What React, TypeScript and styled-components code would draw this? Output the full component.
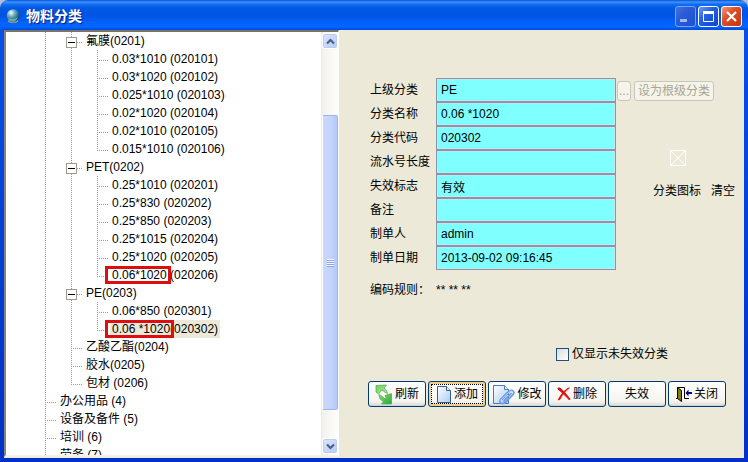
import React from "react";
import styled, { createGlobalStyle, css } from "styled-components";

const Global = createGlobalStyle`
  * { box-sizing: border-box; }
  body {
    margin: 0;
    background: #b9bcd6;
    font: 12px/18px "Liberation Sans", "Noto Sans CJK SC", sans-serif;
    color: #000;
  }
  button, input { font: inherit; color: inherit; margin: 0; padding: 0; }
`;

const Window = styled.div`
  display: flex;
  flex-direction: column;
  height: 100vh;
  border-radius: 8px 8px 0 0;
  overflow: hidden;
  background: #ece9d8;
`;

const TitleBar = styled.header`
  display: flex;
  align-items: center;
  gap: 6px;
  flex: 0 0 30px;
  padding: 2px 6px 0 6px;
  background: linear-gradient(#0a4fd0 0, #3c96ff 2px, #1670f2 4px, #0258e4 8px, #0054e3 16px, #0262fb 22px, #0266ff 27px, #0048d8 30px);
`;

const Title = styled.h1`
  flex: 1;
  margin: 0;
  font: bold 14px/20px "Liberation Sans", "Noto Sans CJK SC", sans-serif;
  color: #fff;
  text-shadow: 1px 1px 1px #0a1883;
`;

const Controls = styled.div`
  display: flex;
  gap: 2px;
`;

const ControlButton = styled.button<{ $tone: "dim" | "blue" | "red" }>`
  display: flex;
  width: 21px;
  height: 21px;
  border: 1px solid ${(p) => (p.$tone === "dim" ? "#7ba2ee" : "#fff")};
  border-radius: 3px;
  background: ${(p) =>
    p.$tone === "red"
      ? "linear-gradient(135deg, #ee9a7f, #de4e29 40%, #c63410)"
      : p.$tone === "blue"
        ? "linear-gradient(135deg, #6c99f5, #2260e4 40%, #0b46cf)"
        : "linear-gradient(135deg, #3f71e2, #2a5cd8 40%, #2050cc)"};
`;

const Body = styled.div`
  display: grid;
  grid-template-columns: 335px minmax(0, 1fr);
  flex: 1;
  min-height: 0;
  border: solid #0a3fe0;
  border-width: 0 4px 4px 4px;
  border-image: linear-gradient(#0650e8, #0030c8) 1;
`;

const TreePanel = styled.nav`
  display: flex;
  min-height: 0;
  margin-bottom: 1px;
  border: 2px solid;
  border-color: #77756b #fff #f4f2e8 #85837a;
  border-right-width: 1px;
  background: #fff;
`;

const Tree = styled.ul`
  flex: 1;
  margin: 0;
  padding: 0 0 0 26px;
  overflow: hidden;
  list-style: none;
`;

const TreeRow = styled.li`
  display: flex;
  height: 18px;
  white-space: pre;
`;

type GuideKind = "line" | "tee" | "end";

const Guide = styled.span<{ $kind: GuideKind }>`
  display: flex;
  align-items: center;
  justify-content: center;
  flex: 0 0 26px;
  background:
    repeating-linear-gradient(#9d9b90 0 1px, transparent 1px 2px) 13px 0 / 1px ${(p) => (p.$kind === "end" ? "10px" : "100%")} no-repeat
    ${(p) =>
      p.$kind !== "line" &&
      css`, repeating-linear-gradient(90deg, #9d9b90 0 1px, transparent 1px 2px) 13px 10px / 12px 1px no-repeat`};
`;

const Expander = styled.button`
  display: flex;
  align-items: center;
  justify-content: center;
  width: 11px;
  height: 11px;
  margin-top: 2px;
  margin-left: 1px;
  border: 1px solid #9d9b90;
  background: #fff;

  &::before {
    content: "";
    width: 7px;
    height: 1px;
    background: #000;
  }
`;

const NodeText = styled.span<{ $selected?: boolean }>`
  padding: 0 2px;
  background: ${(p) => (p.$selected ? "#ece9d8" : "transparent")};
`;

const Mark = styled.span`
  position: relative;
  display: inline-block;

  &::after {
    content: "";
    position: absolute;
    inset: 0 -4px 0 -7px;
    border: 3px solid #dd0d10;
  }
`;

const ScrollBar = styled.div`
  display: flex;
  flex-direction: column;
  flex: 0 0 17px;
  padding: 1px 0;
  border-left: 1px solid #eeede5;
  background: linear-gradient(90deg, #f3f1ec, #fefefb);
`;

const ScrollButton = styled.button`
  display: flex;
  align-items: center;
  justify-content: center;
  flex: 0 0 16px;
  border: 1px solid #fff;
  border-radius: 3px;
  background: linear-gradient(135deg, #dbe5fd, #b7cbf8);
  box-shadow: inset 0 0 0 1px #bccbf0;
`;

const Track = styled.div`
  display: grid;
  grid-template-rows: 66fr 294fr 28fr;
  flex: 1;
`;

const Thumb = styled.div`
  display: flex;
  flex-direction: column;
  align-items: center;
  justify-content: center;
  gap: 1px;
  grid-row: 2;
  border: 1px solid #9fb5ea;
  border-left-color: #fff;
  border-radius: 2px;
  background: linear-gradient(90deg, #cbd8fc, #c3d3fd 60%, #b4c8f8);
`;

const Grip = styled.i`
  width: 7px;
  height: 1px;
  background: #f4f8ff;
  box-shadow: 0 1px #8ca5e4;
`;

const Panel = styled.main`
  padding: 48px 0 0 29px;
`;

const FormArea = styled.div`
  display: grid;
  grid-template-columns: minmax(0, 1fr) 128px;
  padding-left: 2px;
`;

const Field = styled.label`
  display: grid;
  grid-template-columns: 66px minmax(0, 1fr);
  align-items: center;
  height: 24px;
`;

const TextBox = styled.input`
  height: 24px;
  padding: 0 4px;
  border: 1px solid #8796a9;
  border-radius: 0;
  box-shadow: inset 0 0 0 1px #c0e8f0;
  background: #80ffff;
`;

const Side = styled.div`
  display: flex;
  flex-direction: column;
  padding: 3px 0 0 1px;
`;

const SideButtons = styled.div`
  display: flex;
  gap: 3px;
`;

const GhostButton = styled.button`
  height: 20px;
  padding: 0 3px;
  line-height: 18px;
  border: 1px solid #c9c7ba;
  border-radius: 3px;
  background: #f5f4ea;
  color: #a7a594;
  white-space: nowrap;

  &:first-child {
    padding: 0 1px;
  }
`;

const PictureSlot = styled.div`
  display: flex;
  height: 16px;
  margin: 49px 0 0 53px;
`;

const PictureActions = styled.div`
  display: flex;
  gap: 10px;
  margin: 16px 0 0 36px;
`;

const Rule = styled.div`
  display: grid;
  grid-template-columns: 66px 1fr;
  margin-top: 11px;
  padding-left: 2px;
  white-space: nowrap;
`;

const Filter = styled.label`
  display: flex;
  align-items: center;
  gap: 3px;
  width: max-content;
  margin: 46px 76px 0 auto;
`;

const CheckBox = styled.input`
  appearance: none;
  width: 13px;
  height: 13px;
  border: 1px solid #1d5180;
  background: linear-gradient(135deg, #dcdcd7, #fff);
`;

const Actions = styled.div`
  display: flex;
  gap: 2px;
  margin-top: 18px;
`;

const ActionButton = styled.button<{ $active?: boolean }>`
  display: flex;
  align-items: center;
  justify-content: center;
  gap: 2px;
  flex: 0 0 58px;
  height: 26px;
  border: 1px solid #003c74;
  border-radius: 3px;
  background: linear-gradient(#fff, #f5f4ee 80%, #dcd8cc);
  white-space: nowrap;
  ${(p) =>
    p.$active
      ? css`
          box-shadow: inset 0 0 0 2px #f0cf8c;
          outline: 1px dotted #000;
          outline-offset: -4px;
        `
      : css`
          box-shadow: inset 0 -1px #c8d4e6;
        `}
`;

interface Node {
  guides: GuideKind[];
  name: string;
  code: string;
  open?: boolean;
  marked?: boolean;
  selected?: boolean;
}

const leaf = (name: string, code: string, last = false): Node => ({
  guides: ["line", "line", last ? "end" : "tee"],
  name,
  code,
});

const nodes: Node[] = [
  { guides: ["line", "tee"], name: "氟膜", code: "(0201)", open: true },
  leaf("0.03*1010", " (020101)"),
  leaf("0.03*1020", " (020102)"),
  leaf("0.025*1010", " (020103)"),
  leaf("0.02*1020", " (020104)"),
  leaf("0.02*1010", " (020105)"),
  leaf("0.015*1010", " (020106)", true),
  { guides: ["line", "tee"], name: "PET", code: "(0202)", open: true },
  leaf("0.25*1010", " (020201)"),
  leaf("0.25*830", " (020202)"),
  leaf("0.25*850", " (020203)"),
  leaf("0.25*1015", " (020204)"),
  leaf("0.25*1020", " (020205)"),
  { ...leaf("0.06*1020", " (020206)", true), marked: true },
  { guides: ["line", "tee"], name: "PE", code: "(0203)", open: true },
  leaf("0.06*850", " (020301)"),
  { ...leaf("0.06 *1020", "(020302)", true), marked: true, selected: true },
  { guides: ["line", "tee"], name: "乙酸乙酯", code: "(0204)" },
  { guides: ["line", "tee"], name: "胶水", code: "(0205)" },
  { guides: ["line", "end"], name: "包材", code: " (0206)" },
  { guides: ["tee"], name: "办公用品", code: " (4)" },
  { guides: ["tee"], name: "设备及备件", code: " (5)" },
  { guides: ["tee"], name: "培训", code: " (6)" },
  { guides: ["tee"], name: "劳务", code: " (7)" },
];

const fields = [
  ["上级分类", "PE"],
  ["分类名称", "0.06 *1020"],
  ["分类代码", "020302"],
  ["流水号长度", ""],
  ["失效标志", "有效"],
  ["备注", ""],
  ["制单人", "admin"],
  ["制单日期", "2013-09-02 09:16:45"],
];

const Globe = () => (
  <svg width="14" height="14" viewBox="0 0 14 14" aria-hidden="true">
    <defs>
      <radialGradient id="globe" cx="35%" cy="28%" r="75%">
        <stop offset="0" stopColor="#f2ffff" />
        <stop offset=".35" stopColor="#7eb9c4" />
        <stop offset=".75" stopColor="#28718e" />
        <stop offset="1" stopColor="#0c3d66" />
      </radialGradient>
    </defs>
    <ellipse cx="7" cy="12" rx="5" ry="2" fill="#8e9b8f" />
    <circle cx="7" cy="6.5" r="6.3" fill="url(#globe)" />
    <path d="M2 9Q7 12 12 8Q10 13 7 12.6Q3 12.5 2 9Z" fill="#a8dcc8" opacity=".6" />
  </svg>
);

const Chevron = ({ down = false }: { down?: boolean }) => (
  <svg width="9" height="7" viewBox="0 0 9 7" aria-hidden="true">
    <path d={down ? "M1 1.5L4.5 5L8 1.5" : "M1 5.5L4.5 2L8 5.5"} fill="none" stroke="#4d6185" strokeWidth="2.2" />
  </svg>
);

const RefreshIcon = () => (
  <svg width="18" height="21" viewBox="0 0 18 21" aria-hidden="true">
    <defs>
      <linearGradient id="greenTop" x2="1" y2="1">
        <stop stopColor="#6fcf5c" />
        <stop offset="1" stopColor="#b5e8a0" />
      </linearGradient>
      <linearGradient id="greenLow" x2="1" y2="1">
        <stop stopColor="#8ddb78" />
        <stop offset="1" stopColor="#2aa836" />
      </linearGradient>
    </defs>
    <g stroke="#45ae48" strokeWidth=".7" strokeLinejoin="round">
      <path d="M1 1.5L11.5 1L9 4Q12 6 12.5 9.5L9.5 8Q8.500 6.500 6.500 6.500L3.500 10L1 8Z" fill="url(#greenTop)" />
      <path d="M4 10.500L7.500 12.500Q9 15 11.500 14.500L10 11.500L16.500 9.500L16.500 20H6.500L8.500 17.500Q4 15.500 4 10.500Z" fill="url(#greenLow)" />
    </g>
  </svg>
);

const PageShape = () => (
  <>
    <defs>
      <linearGradient id="paper" x2="1" y2="1">
        <stop stopColor="#fff" />
        <stop offset="1" stopColor="#a9cbf1" />
      </linearGradient>
    </defs>
    <path d="M1.5 1.5H10.5L14.5 5.5V17.5H1.5Z" fill="url(#paper)" stroke="#315b99" />
    <path d="M10.5 1.5V5.5H14.5" fill="#e9f3ff" stroke="#315b99" />
  </>
);

const PageIcon = () => (
  <svg width="16" height="19" viewBox="0 0 16 19" aria-hidden="true">
    <PageShape />
  </svg>
);

const EditIcon = () => (
  <svg width="23" height="21" viewBox="0 0 23 21" aria-hidden="true">
    <path d="M1.5 1.5H12.5L16.5 5.5V19.5H1.5Z" fill="url(#paper)" stroke="#4a78b8" />
    <path d="M12.5 1.5V5.5H16.5" fill="#e9f3ff" stroke="#4a78b8" />
    <path
      d="M10.500 15L17.500 7.500Q19.500 5.500 21.200 7.300Q22.500 9 21 10.700L13 18.800Q10.500 20.500 8.700 18.800Q7.200 17 9 15L15.500 8.500M12 17L19 9.500"
      fill="none"
      stroke="#6e9be0"
      strokeWidth="1.8"
      strokeLinecap="round"
    />
    <path d="M9 17.500Q8.500 16.500 9.500 15.200L17.500 7.800Q19.500 6.200 20.700 7.700" fill="none" stroke="#c6dcfa" strokeWidth=".8" />
  </svg>
);

const DeleteIcon = () => (
  <svg width="14" height="14" viewBox="0 0 14 14" aria-hidden="true">
    <path d="M1 1L3 1Q7 4 13 12L12.5 13Q7 7 1 2Z" fill="#e01010" stroke="#e01010" />
    <path d="M12.5 1Q6 5 3 12.5L1 13Q4 6 11 1Z" fill="#e01010" stroke="#e01010" strokeWidth=".7" />
  </svg>
);

const DoorIcon = () => (
  <svg width="16" height="15" viewBox="0 0 16 15" aria-hidden="true">
    <path d="M0 11.5H2M1.5 11V.5H8.5V11.5H13" fill="none" stroke="#000" />
    <path d="M1.5 .5L5.5 3.5V14.5L1.5 11.5Z" fill="#858000" stroke="#000" />
    <path d="M9.500 6L12.500 2.500V5H16V7H12.500V9.500Z" fill="#000090" />
  </svg>
);

const actions = [
  { label: "刷新", icon: <RefreshIcon /> },
  { label: "添加", icon: <PageIcon />, active: true },
  { label: "修改", icon: <EditIcon /> },
  { label: "删除", icon: <DeleteIcon /> },
  { label: "失效" },
  { label: "关闭", icon: <DoorIcon /> },
];

export default function App() {
  return (
    <>
      <Global />
      <Window>
        <TitleBar>
          <Globe />
          <Title>物料分类</Title>
          <Controls>
            <ControlButton $tone="dim" aria-label="最小化">
              <svg width="19" height="19" viewBox="0 0 19 19">
                <path d="M4 13.5H11" stroke="#9db9f3" strokeWidth="3" />
              </svg>
            </ControlButton>
            <ControlButton $tone="blue" aria-label="最大化">
              <svg width="19" height="19" viewBox="0 0 19 19">
                <path d="M4.5 5V14.5H14.5V5" fill="none" stroke="#fff" />
                <path d="M4 5.5H15" stroke="#fff" strokeWidth="3" />
              </svg>
            </ControlButton>
            <ControlButton $tone="red" aria-label="关闭窗口">
              <svg width="19" height="19" viewBox="0 0 19 19">
                <path d="M5 5L14 14M14 5L5 14" stroke="#fff" strokeWidth="2.2" />
              </svg>
            </ControlButton>
          </Controls>
        </TitleBar>
        <Body>
          <TreePanel aria-label="物料分类">
            <Tree>
              {nodes.map((n) => (
                <TreeRow key={n.code}>
                  {n.guides.map((kind, i) => (
                    <Guide key={i} $kind={kind}>
                      {n.open && i === n.guides.length - 1 && <Expander aria-label={`折叠 ${n.name}`} />}
                    </Guide>
                  ))}
                  <NodeText $selected={n.selected}>
                    {n.marked ? <Mark>{n.name}</Mark> : n.name}
                    {n.code}
                  </NodeText>
                </TreeRow>
              ))}
            </Tree>
            <ScrollBar>
              <ScrollButton aria-label="向上滚动">
                <Chevron />
              </ScrollButton>
              <Track>
                <Thumb>
                  <Grip />
                  <Grip />
                  <Grip />
                  <Grip />
                </Thumb>
              </Track>
              <ScrollButton aria-label="向下滚动">
                <Chevron down />
              </ScrollButton>
            </ScrollBar>
          </TreePanel>
          <Panel>
            <FormArea>
              <div>
                {fields.map(([label, value]) => (
                  <Field key={label}>
                    {label}
                    <TextBox type="text" defaultValue={value} />
                  </Field>
                ))}
              </div>
              <Side>
                <SideButtons>
                  <GhostButton disabled aria-label="选择上级分类">...</GhostButton>
                  <GhostButton disabled>设为根级分类</GhostButton>
                </SideButtons>
                <PictureSlot>
                  <svg width="16" height="16" viewBox="0 0 16 16" aria-hidden="true">
                    <path d="M.5 .5H15.5V15.5H.5ZL15.5 15.5M15.5 .5L.5 15.5" fill="none" stroke="#fff" />
                  </svg>
                </PictureSlot>
                <PictureActions>
                  <span>分类图标</span>
                  <span>清空</span>
                </PictureActions>
              </Side>
            </FormArea>
            <Rule>
              <span>编码规则：</span>
              <span>** ** **</span>
            </Rule>
            <Filter>
              <CheckBox type="checkbox" />
              仅显示未失效分类
            </Filter>
            <Actions>
              {actions.map((a) => (
                <ActionButton key={a.label} $active={a.active}>
                  {a.icon}
                  {a.label}
                </ActionButton>
              ))}
            </Actions>
          </Panel>
        </Body>
      </Window>
    </>
  );
}
